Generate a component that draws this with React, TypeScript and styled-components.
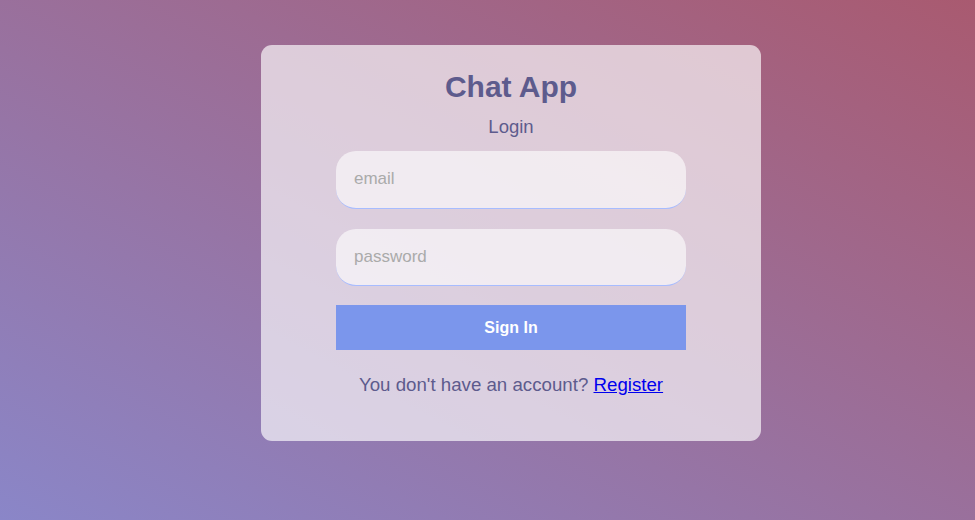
import React from "react";
import styled, { createGlobalStyle } from "styled-components";

const GlobalStyle = createGlobalStyle`
  html, body {
    margin: 0;
    padding: 0;
    height: 100%;
  }
  body {
    font-family: "Liberation Sans", Arial, sans-serif;
  }
`;

const Page = styled.div`
  width: 100%;
  height: 520px;
  box-sizing: border-box;
  display: flex;
  justify-content: center;
  align-items: flex-start;
  padding: 45px 0 0 47px;
  overflow: hidden;
  background: linear-gradient(to top right, #8a86c8, #a95a70);
`;

const Card = styled.div`
  width: 500px;
  box-sizing: border-box;
  padding: 24px 75px 45px;
  border-radius: 11px;
  background: rgba(255, 255, 255, 0.66);
  display: flex;
  flex-direction: column;
  align-items: center;
`;

const Logo = styled.span`
  color: #5d5b8d;
  font-weight: bold;
  font-size: 30px;
  line-height: 36px;
`;

const Title = styled.span`
  color: #5d5b8d;
  font-size: 18.5px;
  line-height: 22px;
  margin-top: 11px;
`;

const Form = styled.form`
  width: 100%;
  display: flex;
  flex-direction: column;
  gap: 20px;
  margin-top: 13px;
`;

const Input = styled.input`
  height: 57.5px;
  box-sizing: border-box;
  padding: 0 18px;
  border: none;
  border-bottom: 1px solid #a7bcff;
  border-radius: 20px;
  background: rgba(255, 255, 255, 0.6);
  font-family: "Liberation Sans", Arial, sans-serif;
  font-size: 17px;
  color: #333;
  outline: none;

  &::placeholder {
    color: #aaa;
  }
`;

const Button = styled.button`
  height: 45px;
  margin-top: -1px;
  border: none;
  background: #7b96ec;
  color: white;
  font-family: "Liberation Sans", Arial, sans-serif;
  font-weight: bold;
  font-size: 16px;
  cursor: pointer;
`;

const Footer = styled.p`
  margin: 24px 0 0;
  color: #5d5b8d;
  font-size: 18.7px;
  line-height: 22px;

  a {
    color: #0000ee;
  }
`;

export default function App() {
  return (
    <>
      <GlobalStyle />
      <Page>
        <Card>
          <Logo>Chat App</Logo>
          <Title>Login</Title>
          <Form onSubmit={(e) => e.preventDefault()}>
            <Input type="email" placeholder="email" />
            <Input type="password" placeholder="password" />
            <Button>Sign In</Button>
          </Form>
          <Footer>
            You don't have an account? <a href="#">Register</a>
          </Footer>
        </Card>
      </Page>
    </>
  );
}
